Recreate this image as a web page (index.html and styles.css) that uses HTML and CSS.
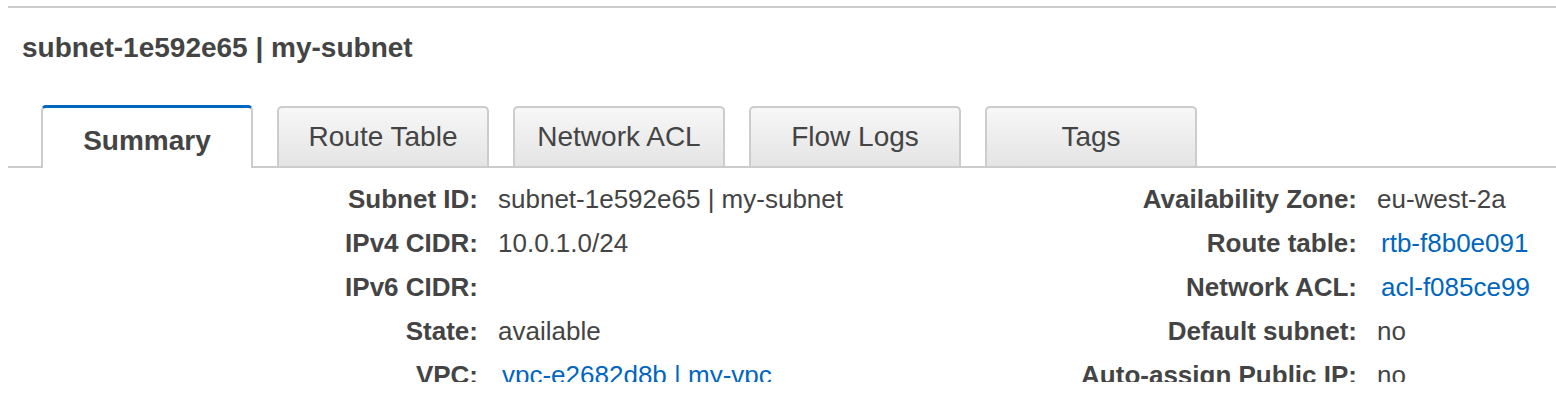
FILE: index.html
```html
<!DOCTYPE html>
<html lang="en">
<head>
<meta charset="utf-8">
<title>subnet-1e592e65 | my-subnet</title>
<link rel="stylesheet" href="styles.css">
</head>
<body>
<div class="panel">
  <h1 class="title">subnet-1e592e65 | my-subnet</h1>
  <div class="tabs">
    <div class="tab active">Summary</div>
    <div class="tab">Route Table</div>
    <div class="tab">Network ACL</div>
    <div class="tab">Flow Logs</div>
    <div class="tab">Tags</div>
  </div>
  <div class="details">
    <div class="label">Subnet ID:</div>
    <div class="value">subnet-1e592e65 | my-subnet</div>
    <div class="label">Availability Zone:</div>
    <div class="value">eu-west-2a</div>

    <div class="label">IPv4 CIDR:</div>
    <div class="value">10.0.1.0/24</div>
    <div class="label">Route table:</div>
    <div class="value"><a class="link" href="#">rtb-f8b0e091</a></div>

    <div class="label">IPv6 CIDR:</div>
    <div class="value"></div>
    <div class="label">Network ACL:</div>
    <div class="value"><a class="link" href="#">acl-f085ce99</a></div>

    <div class="label">State:</div>
    <div class="value">available</div>
    <div class="label">Default subnet:</div>
    <div class="value">no</div>

    <div class="label">VPC:</div>
    <div class="value"><a class="link" href="#">vpc-e2682d8b | my-vpc</a></div>
    <div class="label">Auto-assign Public IP:</div>
    <div class="value">no</div>
  </div>
</div>
</body>
</html>
```
FILE: styles.css
```css
html, body {
  margin: 0;
  padding: 0;
  background: #ffffff;
}

body {
  font-family: "Liberation Sans", Arial, Helvetica, sans-serif;
  color: #444444;
}

.panel {
  margin: 6px 0 0 8px;
  border-top: 2px solid #cccccc;
}

.title {
  margin: 24px 0 0 0;
  padding-left: 14px;
  font-size: 28px;
  line-height: 32px;
  font-weight: bold;
  color: #444444;
}

.tabs {
  display: flex;
  align-items: flex-end;
  gap: 24px;
  margin-top: 41px;
  padding-left: 33px;
  border-bottom: 2px solid #cccccc;
}

.tab {
  box-sizing: border-box;
  width: 212px;
  height: 60px;
  display: flex;
  align-items: center;
  justify-content: center;
  font-size: 28px;
  line-height: 32px;
  color: #444444;
  border: 2px solid #cccccc;
  border-bottom: none;
  border-radius: 5px 5px 0 0;
  background: linear-gradient(#f7f7f7, #e4e4e4);
}

.tab.active {
  position: relative;
  height: 63px;
  margin-bottom: -2px;
  padding-top: 5px;
  border-top: 3px solid #0066bf;
  background: #ffffff;
  font-weight: bold;
}

.details {
  display: grid;
  grid-template-columns: 470px 400px 439px 1fr;
  column-gap: 20px;
  grid-auto-rows: 44px;
  padding-top: 9px;
  height: 205px;
  overflow: hidden;
  font-size: 26px;
  line-height: 44px;
}

.label {
  text-align: right;
  font-weight: bold;
  white-space: nowrap;
}

.value {
  white-space: nowrap;
}

.link {
  padding-left: 4px;
  color: #0066bf;
  text-decoration: none;
}
```
